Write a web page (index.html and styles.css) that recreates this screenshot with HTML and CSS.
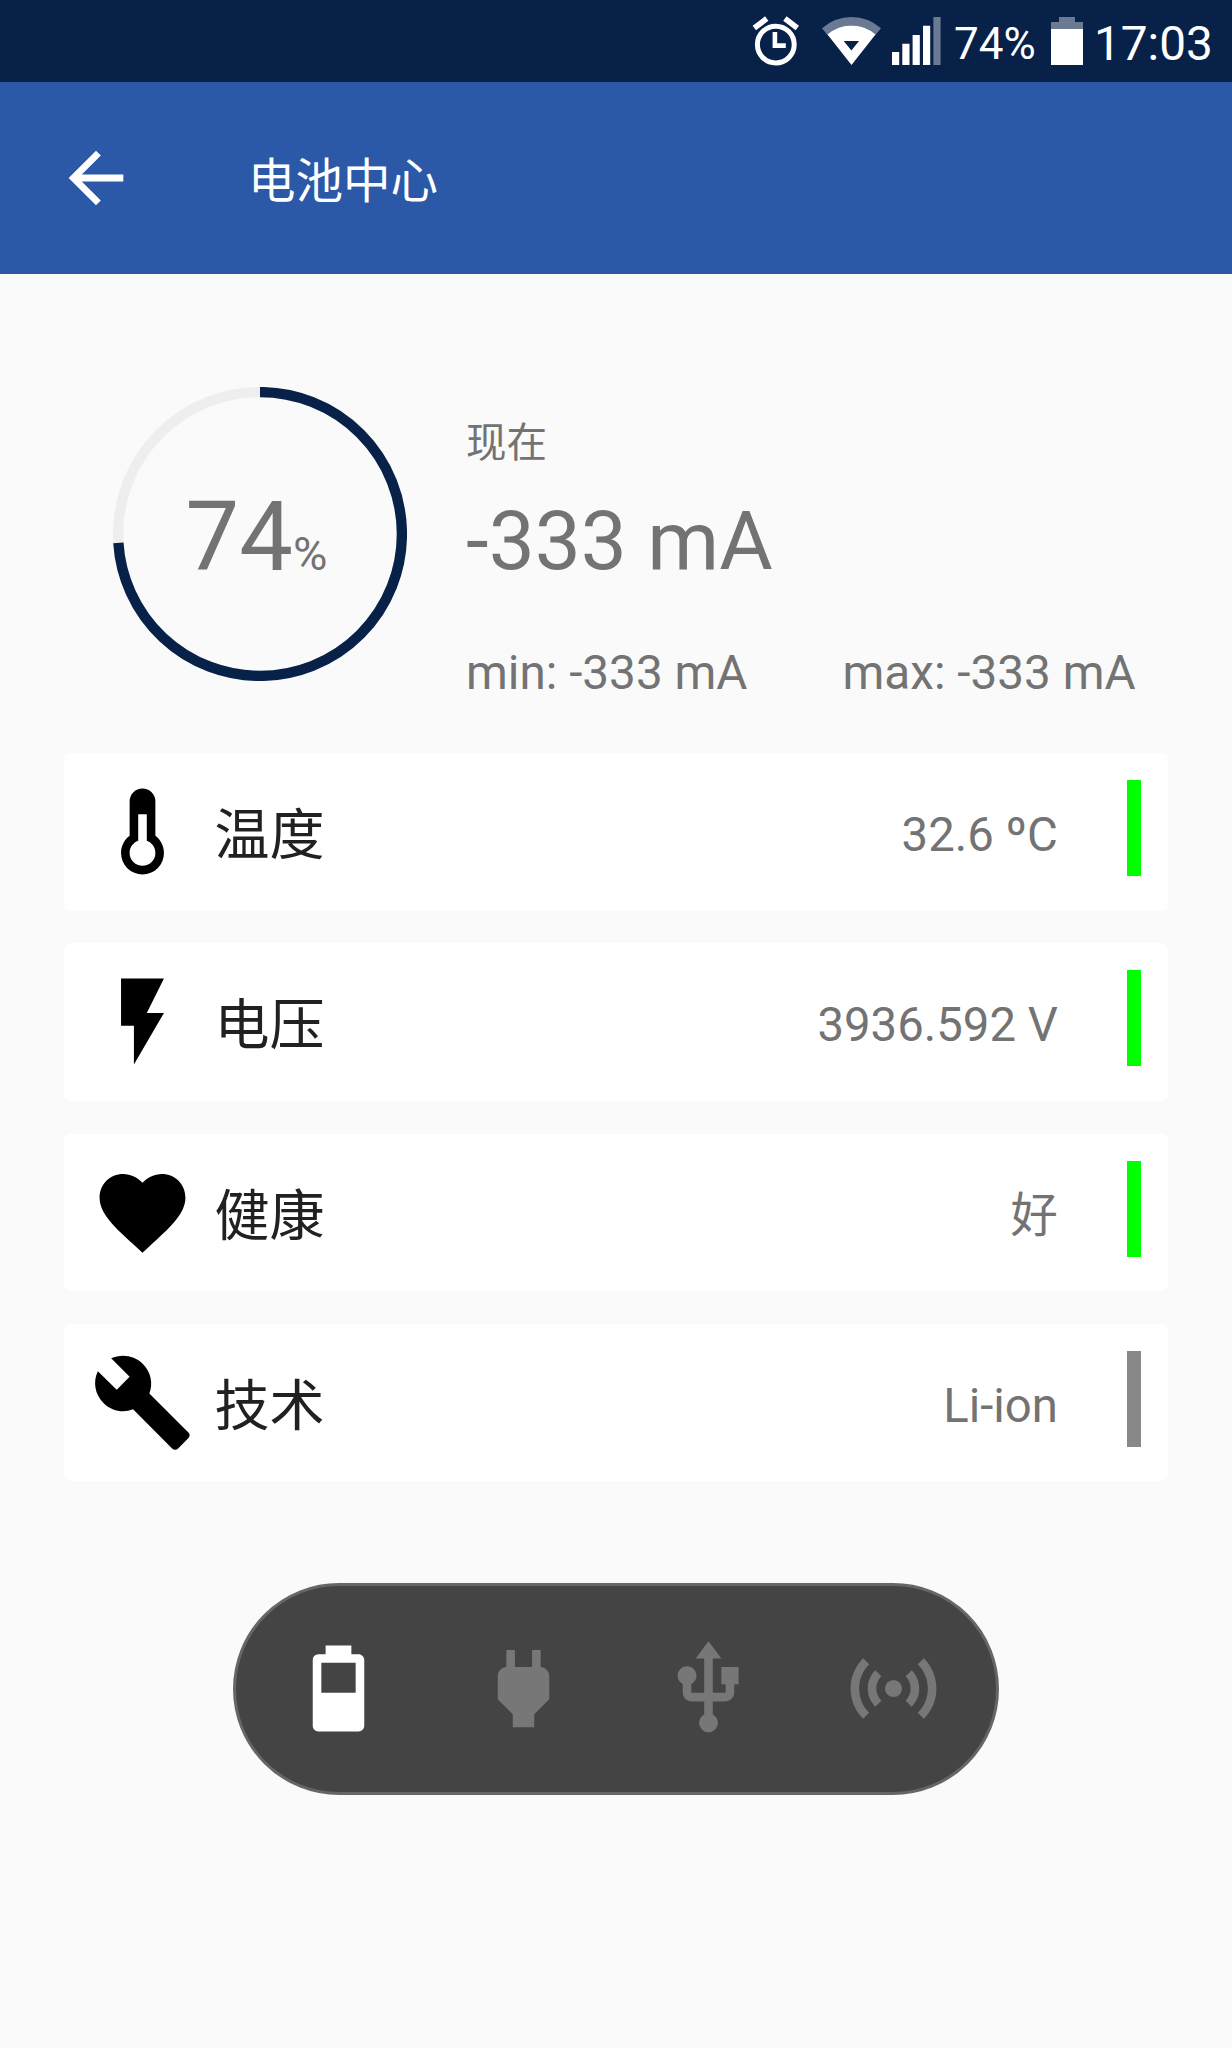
FILE: index.html
```html
<!DOCTYPE html>
<html lang="zh-CN">
<head>
    <meta charset="UTF-8">
    <meta name="viewport" content="width=device-width, initial-scale=1.0">
    <title>电池中心</title>
    <link rel="stylesheet" href="styles.css">
</head>
<body>
    <!-- Status bar -->
    <div class="status-bar">
        <svg class="alarm" width="48" height="50" viewBox="0 0 48 50">
            <circle cx="23.8" cy="28.6" r="18.4" fill="none" stroke="#fff" stroke-width="5"/>
            <path d="M2.3 12L14.7 2.6M45.3 12L32.9 2.6" stroke="#fff" stroke-width="5.6"/>
            <path d="M20.6 16h4.6v11.3h8.6v4.6H20.6z" fill="#fff"/>
        </svg>
        <svg class="wifi" width="60" height="50" viewBox="0 0 60 50">
            <path class="dim" d="M0 12.2Q13 1 29.5 1T59 12.2L53.5 19Q43 9.5 29.5 9.5T5.5 19z"/>
            <path d="M5.5 18.5Q16 9.5 29.5 9.5T53.5 18.5L29.5 49zM21.7 25l7.7 9.5L37 25z" fill="#fff" fill-rule="evenodd"/>
        </svg>
        <svg class="signal" width="49" height="50" viewBox="0 0 49 50">
            <path d="M0 36h7.2v13H0zM10.3 27.7h7.2V49h-7.2zM20.6 18.9h7.2V49h-7.2zM31 9.7h7.2V49H31z" fill="#fff"/>
            <path class="dim" d="M41.4 1h7.2v48h-7.2z"/>
        </svg>
        <span class="status-percent">74%</span>
        <svg class="battery" width="32" height="50" viewBox="0 0 32 50">
            <path class="dim" d="M8 1h16v5h8v7H0V6h8z"/>
            <path d="M0 13h32v36H0z" fill="#fff"/>
        </svg>
        <span class="clock">17:03</span>
    </div>

    <!-- Toolbar -->
    <header class="toolbar">
        <svg class="back" viewBox="0 0 24 24"><path d="M20 11H7.83l5.59-5.59L12 4l-8 8 8 8 1.41-1.41L7.83 13H20v-2z"/></svg>
        <h1>电池中心</h1>
    </header>

    <main>
        <!-- Current level -->
        <section class="summary">
            <div class="gauge">
                <svg width="294" height="294" viewBox="0 0 294 294">
                    <circle cx="147" cy="147" r="141.9" class="track"/>
                    <circle cx="147" cy="147" r="141.9" class="level" pathLength="100" stroke-dasharray="74 26" transform="rotate(-90 147 147)"/>
                </svg>
                <div class="gauge-text"><span class="number">74</span><span class="percent">%</span></div>
            </div>
            <div class="current">
                <div class="now">现在</div>
                <div class="amps">-333 mA</div>
                <div class="range">
                    <span>min: -333 mA</span>
                    <span>max: -333 mA</span>
                </div>
            </div>
        </section>

        <!-- Details -->
        <section class="cards">
            <div class="card">
                <svg class="icon" viewBox="0 0 24 24"><path d="M17,17A5,5 0 0,1 12,22A5,5 0 0,1 7,17C7,15.36 7.79,13.91 9,13V5A3,3 0 0,1 12,2A3,3 0 0,1 15,5V13C16.21,13.91 17,15.36 17,17M11,8V14.17C9.83,14.58 9,15.69 9,17A3,3 0 0,0 12,20A3,3 0 0,0 15,17C15,15.69 14.17,14.58 13,14.17V8H11Z"/></svg>
                <span class="label">温度</span>
                <span class="value">32.6 ºC</span>
                <span class="state ok"></span>
            </div>
            <div class="card">
                <svg class="icon" viewBox="0 0 24 24"><path d="M7,2V13H10V22L17,10H13L17,2H7Z"/></svg>
                <span class="label">电压</span>
                <span class="value">3936.592 V</span>
                <span class="state ok"></span>
            </div>
            <div class="card">
                <svg class="icon" viewBox="0 0 24 24"><path d="M12,21.35L10.55,20.03C5.4,15.36 2,12.27 2,8.5C2,5.41 4.42,3 7.5,3C9.24,3 10.91,3.81 12,5.08C13.09,3.81 14.76,3 16.5,3C19.58,3 22,5.41 22,8.5C22,12.27 18.6,15.36 13.45,20.03L12,21.35Z"/></svg>
                <span class="label">健康</span>
                <span class="value">好</span>
                <span class="state ok"></span>
            </div>
            <div class="card">
                <svg class="icon" viewBox="0 0 24 24"><path d="M22.7,19L13.6,9.9C14.5,7.6 14,4.9 12.1,3C10.1,1 7.1,0.6 4.7,1.7L9,6L6,9L1.6,4.7C0.4,7.1 0.9,10.1 2.9,12.1C4.8,14 7.5,14.5 9.8,13.6L18.9,22.7C19.3,23.1 19.9,23.1 20.3,22.7L22.6,20.4C23.1,20 23.1,19.3 22.7,19Z"/></svg>
                <span class="label">技术</span>
                <span class="value">Li-ion</span>
                <span class="state"></span>
            </div>
        </section>

        <!-- Power source -->
        <nav class="sources">
            <svg class="icon active" viewBox="0 0 24 24"><path d="M16,13H8V6H16M16.67,4H15V2H9V4H7.33A1.33,1.33 0 0,0 6,5.33V20.67C6,21.4 6.6,22 7.33,22H16.67A1.33,1.33 0 0,0 18,20.67V5.33C18,4.6 17.4,4 16.67,4Z"/></svg>
            <svg class="icon" viewBox="0 0 24 24"><path d="M16,7V3H14V7H10V3H8V7C7,7 6,8 6,9V14.5L9.5,18V21H14.5V18L18,14.5V9C18,8 17,7 16,7Z"/></svg>
            <svg class="icon" viewBox="0 0 24 24"><path d="M15,7V11H16V13H13V5H15L12,1L9,5H11V13H8V10.93C8.7,10.56 9.2,9.85 9.2,9C9.2,7.78 8.21,6.8 7,6.8C5.78,6.8 4.8,7.78 4.8,9C4.8,9.85 5.3,10.56 6,10.93V13A2,2 0 0,0 8,15H11V18.05C10.29,18.41 9.8,19.15 9.8,20A2.2,2.2 0 0,0 12,22.2A2.2,2.2 0 0,0 14.2,20C14.2,19.15 13.71,18.41 13,18.05V15H16A2,2 0 0,0 18,13V11H19V7H15Z"/></svg>
            <svg class="icon" viewBox="0 0 24 24"><path d="M4.93,4.93C3.12,6.74 2,9.24 2,12C2,14.76 3.12,17.26 4.93,19.07L6.34,17.66C4.89,16.22 4,14.22 4,12C4,9.79 4.89,7.78 6.34,6.34L4.93,4.93M19.07,4.93L17.66,6.34C19.11,7.79 20,9.79 20,12C20,14.22 19.11,16.22 17.66,17.66L19.07,19.07C20.88,17.26 22,14.76 22,12C22,9.24 20.88,6.74 19.07,4.93M7.76,7.76C6.67,8.85 6,10.35 6,12C6,13.65 6.67,15.15 7.76,16.24L9.17,14.83C8.45,14.11 8,13.11 8,12C8,10.89 8.45,9.89 9.17,9.17L7.76,7.76M16.24,7.76L14.83,9.17C15.55,9.89 16,10.89 16,12C16,13.11 15.55,14.11 14.83,14.83L16.24,16.24C17.33,15.15 18,13.65 18,12C18,10.35 17.33,8.85 16.24,7.76M12,10A2,2 0 0,0 10,12A2,2 0 0,0 12,14A2,2 0 0,0 14,12A2,2 0 0,0 12,10Z"/></svg>
        </nav>
    </main>
</body>
</html>
```
FILE: styles.css
```css
* {
    box-sizing: border-box;
}

body {
    margin: 0;
    min-height: 2048px;
    background-color: #fafafa;
    color: #737373;
    font-family: Roboto, "Noto Sans CJK SC", sans-serif;
    font-size: 47.7px;
}

svg {
    display: block;
    flex-shrink: 0;
}

.status-bar {
    display: flex;
    justify-content: flex-end;
    align-items: center;
    height: 82px;
    padding-right: 20px;
    background-color: #082149;
    color: #fff;
    line-height: 82px;
}

.wifi {
    margin-left: 22px;
}

.signal {
    margin-left: 10px;
}

.dim {
    fill: #6b7a93;
}

.status-percent {
    width: 110px;
    padding: 5px 0 0 13px;
    font-size: 44px;
}

.clock {
    width: 129px;
    padding: 5px 0 0 11px;
}

.toolbar {
    display: flex;
    align-items: center;
    height: 192px;
    padding-left: 55px;
    background-color: #2b59a8;
    color: #fff;
}

.back {
    width: 82px;
    height: 82px;
    fill: #fff;
}

h1 {
    margin: 8px 0 0 111px;
    font-size: 47.5px;
    font-weight: normal;
    line-height: 64px;
}

main {
    padding: 113px 64px 0;
}

.summary {
    display: flex;
    height: 366px;
    padding-left: 49px;
}

.gauge {
    position: relative;
    width: 294px;
    height: 294px;
}

.gauge circle {
    fill: none;
    stroke-width: 10.3;
}

.track {
    stroke: #eee;
}

.level {
    stroke: #082149;
}

.gauge-text {
    position: absolute;
    top: 94px;
    left: 0;
    width: 287px;
    line-height: 112px;
    text-align: center;
}

.number {
    font-size: 95.5px;
}

.percent {
    font-size: 47px;
}

.current {
    margin-left: 59px;
    padding-top: 28px;
}

.now {
    font-size: 40.5px;
    line-height: 56px;
}

.amps {
    margin-top: 22px;
    font-size: 82px;
    line-height: 96px;
}

.range {
    display: flex;
    gap: 95px;
    margin-top: 56px;
    line-height: 56px;
    white-space: nowrap;
}

.cards {
    display: flex;
    flex-direction: column;
    gap: 32.8px;
}

.card {
    display: flex;
    align-items: flex-start;
    height: 157.5px;
    padding: 27px 27.5px 0;
    background-color: #fff;
    border-radius: 7px;
}

.icon {
    width: 103px;
    height: 103px;
}

.card .icon {
    margin-left: -1px;
}

.label {
    margin: 15px 0 0 21px;
    color: #212121;
    font-size: 55px;
    line-height: 80px;
}

.value {
    margin: 15px 0 0 auto;
    font-size: 47.3px;
    line-height: 80px;
}

.state {
    width: 13.7px;
    height: 96px;
    margin-left: 69px;
    background-color: #888;
}

.state.ok {
    background-color: #0f0;
}

.sources {
    display: flex;
    justify-content: center;
    align-items: center;
    gap: 81.8px;
    width: 766px;
    height: 212px;
    margin: 102px auto 0;
    padding-bottom: 2px;
    background-color: #444;
    border: 3.5px solid #666;
    border-radius: 106px;
}

.sources .icon {
    fill: #777;
}

.sources .active {
    fill: #fff;
}
```
